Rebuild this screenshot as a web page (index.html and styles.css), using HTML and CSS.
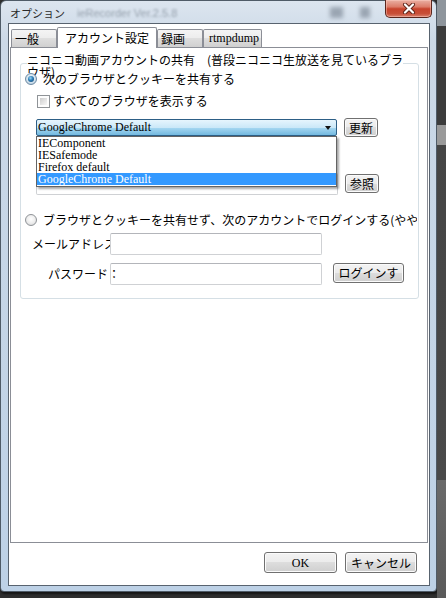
FILE: index.html
```html
<!DOCTYPE html>
<html lang="ja">
<head>
<meta charset="utf-8">
<title>オプション</title>
<link rel="stylesheet" href="styles.css">
</head>
<body>
<div class="screen">
  <div class="window">
    <div class="titlebar">
      <span class="title">オプション</span>
      <span class="ghost">ieRecorder Ver.2.5.8</span>
      <span class="blobs"><i></i><i></i></span>
      <span class="close">
        <svg width="14" height="11" viewBox="0 0 14 11"><path d="M3 1.5 L11 9.5 M11 1.5 L3 9.5" stroke="#5e2419" stroke-width="4" stroke-linecap="round"/><path d="M3 1.5 L11 9.5 M11 1.5 L3 9.5" stroke="#ffffff" stroke-width="2.2" stroke-linecap="round"/></svg>
      </span>
    </div>
    <div class="client">
      <div class="tabs">
        <div class="tab t1">一般</div>
        <div class="tab active t2">アカウント設定</div>
        <div class="tab t3">録画</div>
        <div class="tab t4 latin">rtmpdump</div>
      </div>
      <div class="pane">
        <div class="group">
          <div class="group-title">ニコニコ動画アカウントの共有　(普段ニコニコ生放送を見ているブラ<br>ウザ)</div>
          <div class="row r1"><span class="radio checked"></span><span class="rlabel">次のブラウザとクッキーを共有する</span></div>
          <div class="row r2"><span class="check"></span><span class="clabel">すべてのブラウザを表示する</span></div>
          <div class="row r3">
            <div class="combo-wrap">
              <div class="combo latin"><span>GoogleChrome Default</span><span class="arrow"></span></div>
              <ul class="droplist latin">
                <li>IEComponent</li>
                <li>IESafemode</li>
                <li>Firefox default</li>
                <li class="sel">GoogleChrome Default</li>
              </ul>
            </div>
            <span class="btn small">更新</span>
          </div>
          <div class="row r4">
            <div class="textbox path"></div>
            <span class="btn small ref">参照</span>
          </div>
          <div class="row r5"><span class="radio"></span><span class="rlabel2">ブラウザとクッキーを共有せず、次のアカウントでログインする(やや難しい)</span></div>
          <div class="row r6"><span class="mail-label">メールアドレス</span><div class="textbox mail"></div></div>
          <div class="row r7"><span class="pass-label">パスワード：</span><div class="textbox pass"></div><span class="btn login">ログインす</span></div>
        </div>
      </div>
      <div class="footer">
        <span class="btn ok latin">OK</span>
        <span class="btn cancel">キャンセル</span>
      </div>
    </div>
  </div>
  <div class="strip"></div>
</div>
</body>
</html>
```
FILE: styles.css
```css
html, body {
  margin: 0;
  padding: 0;
}
body {
  width: 446px;
  height: 598px;
  overflow: hidden;
  background: #2b2b2b;
  font-family: "Noto Sans CJK JP", "Noto Sans", sans-serif;
  font-size: 12px;
  color: #000;
}
.screen {
  display: flex;
  height: 598px;
  background: #2e2e2e;
}
.window {
  width: 437px;
  height: 592px;
  flex: none;
  box-sizing: border-box;
  border: 1px solid #4f5b67;
  border-radius: 6px 6px 4px 4px;
  background: linear-gradient(180deg, #dce5ef 0, #ccd9e7 40px, #bdd1e6 100%);
  display: flex;
  flex-direction: column;
  padding: 0 6px 5px 7px;
  box-shadow: 1px 2px 2px rgba(0,0,0,0.55);
}
.titlebar {
  height: 22px;
  flex: none;
  display: flex;
  align-items: flex-start;
}
.title {
  margin: 5px 0 0 2px;
  font-size: 11px;
  line-height: 14px;
  color: #2a2a2a;
}
.ghost {
  margin: 6px 0 0 12px;
  font-family: "Liberation Sans", sans-serif;
  font-size: 11px;
  line-height: 13px;
  color: #97a2ae;
  filter: blur(1.3px);
}
.blobs {
  margin-left: auto;
  margin-right: 15px;
  display: flex;
  gap: 17px;
  margin-top: 6px;
}
.blobs i {
  display: block;
  width: 13px;
  height: 11px;
  background: #9aa5b2;
  filter: blur(2px);
}
.blobs i + i { width: 10px; }
.close {
  margin: -1px -2px 0 0;
  width: 47px;
  height: 18px;
  box-sizing: border-box;
  border: 1px solid #5a261d;
  border-top: none;
  border-radius: 0 0 5px 5px;
  background: linear-gradient(180deg, #eab0a3 0, #dc7c69 40%, #c7432c 52%, #c84f38 80%, #d9826f 100%);
  box-shadow: inset 0 0 0 1px rgba(255,210,200,0.45);
  display: flex;
  align-items: center;
  justify-content: center;
}
.client {
  flex: 1;
  background: #fff;
  border: 1px solid #58636f;
  display: flex;
  flex-direction: column;
}
.tabs {
  height: 23px;
  flex: none;
  display: flex;
  align-items: flex-end;
  padding-left: 2px;
}
.tab {
  height: 18px;
  box-sizing: border-box;
  border: 1px solid #8b8e96;
  border-bottom: none;
  border-radius: 2px 2px 0 0;
  background: linear-gradient(180deg, #f4f4f4 0, #ececec 50%, #dedede 50%, #d0d0d0 100%);
  line-height: 17px;
  white-space: nowrap;
  font-size: 12px;
}
.t1 { width: 46px; padding-left: 3px; }
.t2 {
  width: 100px;
  padding-left: 7px;
  height: 21px;
  margin-bottom: -1px;
  background: #fff;
  position: relative;
  z-index: 1;
  line-height: 19px;
}
.t3 { width: 46px; padding-left: 3px; }
.t4 { width: 59px; padding-left: 5px; }
.latin {
  font-family: "Liberation Serif", serif;
  font-size: 12px;
}
.pane {
  height: 496px;
  flex: none;
  box-sizing: border-box;
  margin: 0 1px;
  border: 1px solid #8b8e96;
  padding: 15px 0 0 9px;
}
.group {
  width: 399px;
  box-sizing: border-box;
  border: 1px solid #d5dfe5;
  border-radius: 3px;
  padding: 0 0 13px 0;
  display: flex;
  flex-direction: column;
}
.group-title {
  align-self: flex-start;
  height: 12px;
  margin: -10px 0 0 6px;
  line-height: 12px;
  background: #fff;
  white-space: nowrap;
}
.row {
  display: flex;
  align-items: center;
}
.r1 { margin-top: 6px; height: 14px; }
.radio {
  flex: none;
  width: 12px;
  height: 12px;
  box-sizing: border-box;
  border-radius: 50%;
  border: 1px solid #8f9397;
  background: radial-gradient(circle at 50% 40%, #ffffff 0, #ececec 55%, #c9cbcd 100%);
  position: relative;
  margin-left: 4px;
}
.radio.checked {
  border-color: #6d8aa3;
  background: radial-gradient(circle at 50% 40%, #f4f9fc 0, #cfe0ec 60%, #9fb8cb 100%);
}
.radio.checked::after {
  content: "";
  position: absolute;
  left: 2px;
  top: 2px;
  width: 6px;
  height: 6px;
  border-radius: 50%;
  background: radial-gradient(circle at 40% 35%, #9ad8f6 0, #2c7db6 45%, #123f69 100%);
}
.rlabel { margin-left: 6px; line-height: 14px; white-space: nowrap; }
.r2 { margin-top: 8px; height: 14px; }
.check {
  flex: none;
  width: 13px;
  height: 13px;
  box-sizing: border-box;
  margin-left: 16px;
  border: 1px solid #8f9397;
  padding: 2px;
  background: linear-gradient(135deg, #cdcdcd, #f7f7f7) content-box, #fdfdfd;
}
.clabel { margin-left: 3px; line-height: 14px; }
.r3 { margin-top: 10px; height: 19px; align-items: flex-start; }
.combo-wrap {
  position: relative;
  margin-left: 15px;
  width: 301px;
  flex: none;
}
.combo {
  margin-top: 1px;
  height: 17px;
  box-sizing: border-box;
  border: 1px solid #2d5f86;
  border-radius: 2px;
  background: linear-gradient(180deg, #e6f5fd 0, #cbe8f8 50%, #a6d7f1 52%, #73b9df 100%);
  display: flex;
  align-items: center;
  padding: 0 5px 0 1px;
  line-height: 15px;
}
.arrow {
  margin-left: auto;
  width: 0;
  height: 0;
  border-left: 3.5px solid transparent;
  border-right: 3.5px solid transparent;
  border-top: 4px solid #111;
}
.droplist {
  position: absolute;
  left: 0;
  top: 18px;
  width: 301px;
  box-sizing: border-box;
  margin: 0;
  padding: 0 0 1px 0;
  list-style: none;
  background: #fff;
  border: 1px solid #646464;
  box-shadow: 2px 2px 2px rgba(0,0,0,0.35);
  z-index: 5;
}
.droplist li {
  height: 12px;
  line-height: 12px;
  padding-left: 1px;
  white-space: nowrap;
}
.droplist li.sel {
  background: #3399ff;
  color: #fff;
}
.btn {
  flex: none;
  box-sizing: border-box;
  display: flex;
  align-items: center;
  justify-content: center;
  border: 1px solid #707070;
  border-radius: 3px;
  background: linear-gradient(180deg, #f3f3f3 0, #ebebeb 50%, #dddddd 50%, #cfcfcf 100%);
  box-shadow: inset 0 0 0 1px #fbfbfb;
  line-height: 14px;
  white-space: nowrap;
}
.small {
  margin-left: 7px;
  width: 34px;
  height: 19px;
}
.r4 { margin-top: 36px; height: 22px; align-items: flex-start; }
.textbox {
  flex: none;
  box-sizing: border-box;
  height: 22px;
  border: 1px solid #cfd1d4;
  border-top-color: #b3b5ba;
  border-radius: 2px;
  background: #fff;
}
.path { margin-left: 15px; width: 302px; }
.ref { margin-top: 1px; margin-left: 7px; }
.r5 {
  margin-top: 18px;
  height: 14px;
  width: 396px;
  overflow: hidden;
}
.rlabel2 { margin-left: 6px; line-height: 14px; white-space: nowrap; }
.r6 { margin-top: 6px; height: 22px; }
.mail-label {
  margin-left: 11px;
  width: 84px;
  flex: none;
  white-space: nowrap;
  line-height: 22px;
}
.mail {
  margin-left: -6px;
  width: 212px;
  position: relative;
}
.r7 { margin-top: 8px; height: 22px; align-items: flex-start; }
.pass-label {
  margin-left: 27px;
  width: 72px;
  flex: none;
  white-space: nowrap;
  line-height: 22px;
  position: relative;
  z-index: 2;
}
.pass {
  margin-left: -10px;
  width: 212px;
  position: relative;
  z-index: 1;
}
.login {
  margin-left: 11px;
  width: 71px;
  height: 20px;
}
.footer {
  display: flex;
  justify-content: flex-end;
  gap: 8px;
  padding: 9px 12px 0 0;
}
.ok { width: 73px; height: 21px; }
.cancel { width: 72px; height: 21px; }
.strip {
  flex: 1;
  height: 598px;
  background: linear-gradient(180deg, #8e959c 0, #8e959c 26px, #3c3c3c 26px, #3c3c3c 125px, #9a9a9a 125px, #9a9a9a 145px, #454545 145px, #4a4a4a 480px, #6a6a6a 480px, #5a5a5a 598px);
}
```
